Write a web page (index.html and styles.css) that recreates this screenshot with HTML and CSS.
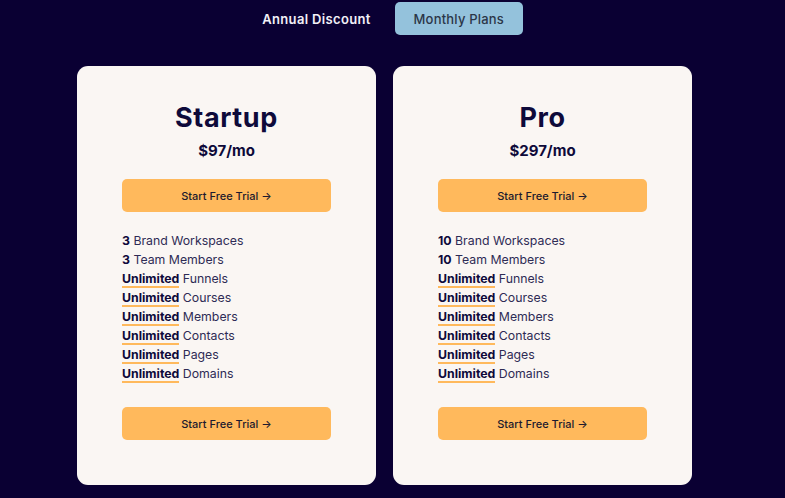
FILE: index.html
```html
<!DOCTYPE html>
<html lang="en">
<head>
    <meta charset="UTF-8">
    <meta name="viewport" content="width=device-width, initial-scale=1.0">
    <title>Pricing</title>
    <link rel="stylesheet" href="styles.css">
</head>
<body>
    <div class="toggle">
        <span class="toggle-label">Annual Discount</span>
        <button class="toggle-btn">Monthly Plans</button>
    </div>

    <div class="plans">
        <div class="card">
            <h2 class="plan-name">Startup</h2>
            <div class="price">$97/mo</div>
            <button class="trial">Start Free Trial &#8594;</button>
            <ul class="features">
                <li><b>3</b> Brand Workspaces</li>
                <li><b>3</b> Team Members</li>
                <li><b class="mark">Unlimited</b> Funnels</li>
                <li><b class="mark">Unlimited</b> Courses</li>
                <li><b class="mark">Unlimited</b> Members</li>
                <li><b class="mark">Unlimited</b> Contacts</li>
                <li><b class="mark">Unlimited</b> Pages</li>
                <li><b class="mark">Unlimited</b> Domains</li>
            </ul>
            <button class="trial">Start Free Trial &#8594;</button>
        </div>

        <div class="card">
            <h2 class="plan-name">Pro</h2>
            <div class="price">$297/mo</div>
            <button class="trial">Start Free Trial &#8594;</button>
            <ul class="features">
                <li><b>10</b> Brand Workspaces</li>
                <li><b>10</b> Team Members</li>
                <li><b class="mark">Unlimited</b> Funnels</li>
                <li><b class="mark">Unlimited</b> Courses</li>
                <li><b class="mark">Unlimited</b> Members</li>
                <li><b class="mark">Unlimited</b> Contacts</li>
                <li><b class="mark">Unlimited</b> Pages</li>
                <li><b class="mark">Unlimited</b> Domains</li>
            </ul>
            <button class="trial">Start Free Trial &#8594;</button>
        </div>
    </div>
</body>
</html>
```

FILE: styles.css
```css
body {
    margin: 0;
    background-color: #0a0033;
    font-family: Inter, "Noto Sans", sans-serif;
    color: #0e0a3a;
}

.toggle {
    display: flex;
    justify-content: center;
    align-items: center;
    gap: 24px;
    padding-top: 2px;
}

.toggle-label {
    color: #f2f0f7;
    font-size: 13px;
    font-weight: 600;
    letter-spacing: 0.35px;
}

.toggle-btn {
    background-color: #94c2dc;
    color: #2b3648;
    border: none;
    border-radius: 5px;
    width: 128px;
    height: 33px;
    font-family: inherit;
    font-size: 13px;
    font-weight: 500;
    letter-spacing: 0.2px;
}

.plans {
    display: flex;
    gap: 17px;
    padding: 31px 0 0 77px;
}

.card {
    width: 209px;
    background-color: #faf6f3;
    border-radius: 11px;
    padding: 36px 45px 45px;
    display: flex;
    flex-direction: column;
}

.plan-name {
    margin: 0;
    text-align: center;
    font-size: 27px;
    line-height: 32px;
    font-weight: 700;
    letter-spacing: 0.6px;
}

.price {
    margin-top: 7px;
    text-align: center;
    font-size: 15px;
    line-height: 20px;
    font-weight: 700;
}

.trial {
    height: 33px;
    margin-top: 18px;
    background-color: #ffb95c;
    color: #1c1a2e;
    border: none;
    border-radius: 5px;
    font-family: inherit;
    font-size: 11px;
    font-weight: 500;
}

.features {
    list-style: none;
    margin: 19px 0 24px;
    padding: 0;
    font-size: 12.3px;
    line-height: 19px;
    color: #2e2b55;
}

.features b {
    color: #0e0a3a;
}

.features + .trial {
    margin-top: 0;
}

.mark {
    border-bottom: 2px solid #ffb95c;
}
```
